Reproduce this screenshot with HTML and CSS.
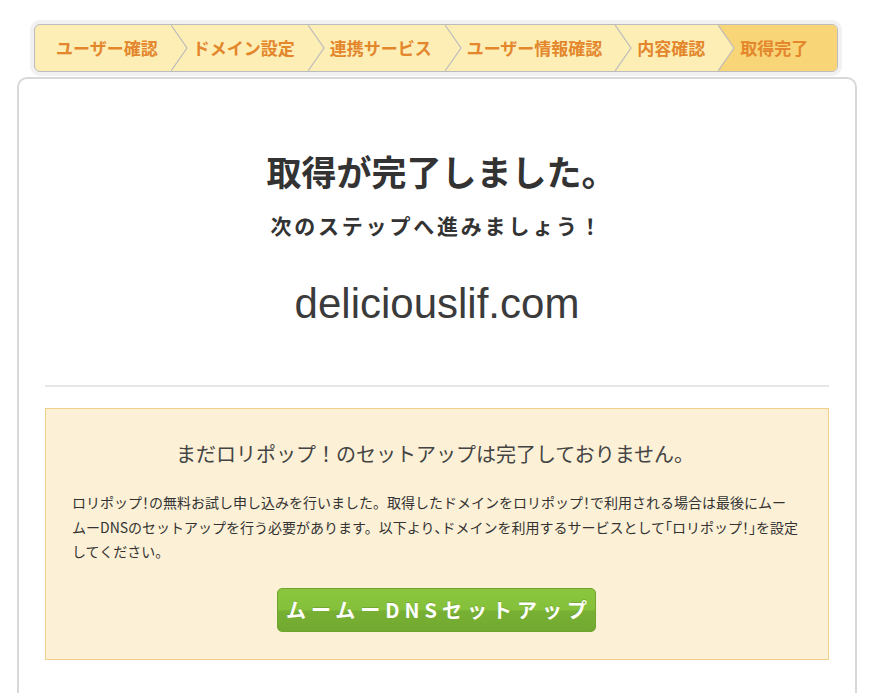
FILE: index.html
```html
<!doctype html>
<html lang="ja">
    <head>
        <meta charset="utf-8">
        <link rel="stylesheet" href="styles.css">
    </head>
    <body>
        <div class="steps-frame">
            <ol class="steps">
                <li class="step">ユーザー確認<svg class="chevron" viewBox="0 0 17 46" width="17" height="46"><polygon points="0,0 16,23 0,46" /><polyline points="0,0 16,23 0,46" /></svg></li>
                <li class="step">ドメイン設定<svg class="chevron" viewBox="0 0 17 46" width="17" height="46"><polygon points="0,0 16,23 0,46" /><polyline points="0,0 16,23 0,46" /></svg></li>
                <li class="step">連携サービス<svg class="chevron" viewBox="0 0 17 46" width="17" height="46"><polygon points="0,0 16,23 0,46" /><polyline points="0,0 16,23 0,46" /></svg></li>
                <li class="step">ユーザー情報確認<svg class="chevron" viewBox="0 0 17 46" width="17" height="46"><polygon points="0,0 16,23 0,46" /><polyline points="0,0 16,23 0,46" /></svg></li>
                <li class="step">内容確認<svg class="chevron" viewBox="0 0 17 46" width="17" height="46"><polygon points="0,0 16,23 0,46" /><polyline points="0,0 16,23 0,46" /></svg></li>
                <li class="step current">取得完了</li>
            </ol>
        </div>

        <main class="card">
            <h1 class="title">取得が完了しました。</h1>
            <p class="subtitle">次のステップへ進みましょう！</p>
            <p class="domain">deliciouslif.com</p>

            <hr class="divider">

            <section class="notice">
                <h2 class="notice-title">まだロリポップ！のセットアップは完了しておりません。</h2>
                <p class="notice-text">ロリポップ<span class="narrow">！</span>の無料お試し申し込みを行いました。取得したドメインをロリポップ<span class="narrow">！</span>で利用される場合は最後にムームーDNSのセットアップを行う必要があります。以下より<span class="narrow">、</span>ドメインを利用するサービスとして<span class="narrow">「</span>ロリポップ<span class="narrow">！」</span>を設定してください。</p>
                <div class="notice-action">
                    <button class="setup-button">ムームーDNSセットアップ</button>
                </div>
            </section>
        </main>
    </body>
</html>
```

FILE: styles.css
```css
html,
body {
    overflow: hidden;
}
body {
    margin: 0;
    background: #fff;
    font-family: "Noto Sans CJK JP", "Noto Sans", sans-serif;
    color: #333;
}

.steps-frame {
    width: 804px;
    margin: 20px 0 0 30px;
    padding: 4px;
    background: #f1f1f1;
    border-radius: 10px;
}
.steps {
    display: flex;
    margin: 0;
    padding: 0;
    list-style: none;
    height: 46px;
    background: #fdeeb6;
    border: 1px solid #bcbcbc;
    border-radius: 6px;
    overflow: hidden;
}
.step {
    position: relative;
    padding: 0 14px 0 21px;
    line-height: 46px;
    font-size: 17px;
    font-weight: bold;
    color: #e3862c;
    white-space: nowrap;
}
.step.current {
    flex: 1;
    background: #f8d577;
}
.chevron {
    position: absolute;
    top: 0;
    right: -16px;
    z-index: 1;
}
.chevron polygon {
    fill: #fdeeb6;
}
.chevron polyline {
    fill: none;
    stroke: #bcbcbc;
    stroke-width: 1.2;
}

.card {
    margin: 1px 0 0 17px;
    width: 784px;
    height: 700px;
    padding: 72px 26px 0;
    border: 2px solid #d8d8d8;
    border-radius: 10px;
    background: #fff;
}
.title {
    margin: 0;
    padding-left: 9px;
    text-align: center;
    font-size: 35px;
    line-height: 40px;
    font-weight: bold;
    color: #333;
}
.subtitle {
    margin: 19px 0 0;
    text-align: center;
    font-size: 21px;
    line-height: 30px;
    font-weight: bold;
    letter-spacing: 2.8px;
    color: #333;
}
.domain {
    margin: 39px 0 0;
    text-align: center;
    font-family: "Liberation Sans", Arial, sans-serif;
    font-size: 42px;
    line-height: 50px;
    color: #3b3b3b;
}
.divider {
    margin: 56px 0 0;
    height: 2px;
    border: 0;
    background: #e6e6e6;
}

.notice {
    margin-top: 21px;
    padding: 31px 30px 27px 26px;
    background: #fcf0d6;
    border: 1px solid #f0d088;
}
.notice-title {
    margin: 0;
    text-align: center;
    font-size: 20px;
    line-height: 28px;
    font-weight: normal;
    color: #444;
}
.notice-text {
    margin: 22px 0 0;
    font-size: 14px;
    line-height: 24.5px;
    color: #333;
}
.narrow {
    font-feature-settings: "halt";
}
.notice-action {
    display: flex;
    justify-content: center;
    margin-top: 24px;
    padding-left: 3px;
}
.setup-button {
    width: 319px;
    height: 44px;
    padding: 0 0 0 5px;
    border: 1px solid #6fa52f;
    border-radius: 5px;
    background: linear-gradient(#8cc63f 0%, #84c03a 50%, #77b033 52%, #72aa31 100%);
    color: #fff;
    font-family: "Noto Sans CJK JP", "Noto Sans", sans-serif;
    font-size: 20px;
    font-weight: bold;
    letter-spacing: 5px;
    white-space: nowrap;
    text-shadow: 0 -1px 0 rgba(0, 0, 0, 0.15);
}
```
